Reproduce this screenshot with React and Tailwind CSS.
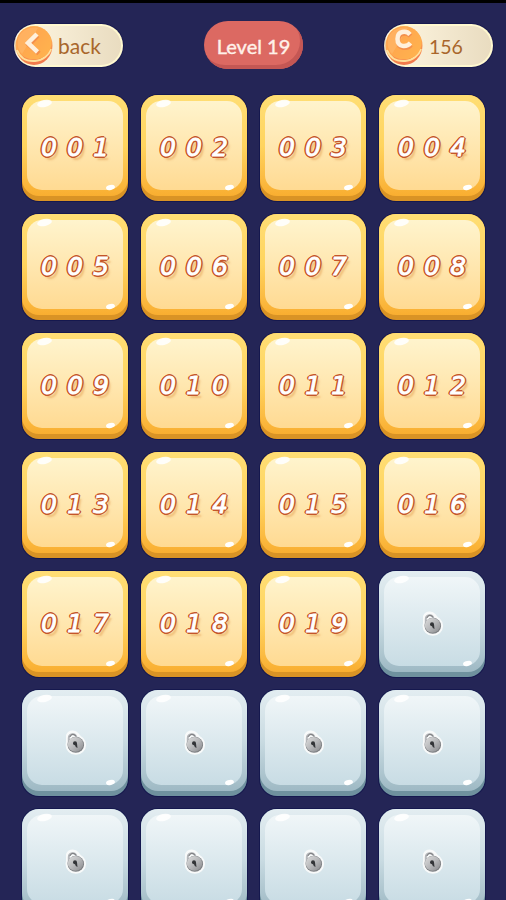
const TOTAL_LEVELS = 28;
const CURRENT_LEVEL = 19;
const COINS = 156;

function Coin({ type }) {
  return (
    <svg className="h-[41px] w-[38px] shrink-0" viewBox="0 0 38 41">
      <defs>
        <linearGradient id={`rim-${type}`} x1="0" y1="0" x2="0.3" y2="1">
          <stop offset="0" stopColor="#ffc05a" />
          <stop offset="0.6" stopColor="#ffa552" />
          <stop offset="1" stopColor="#f27a4c" />
        </linearGradient>
        <linearGradient id={`face-${type}`} x1="0" y1="0" x2="1" y2="0.7">
          <stop offset="0" stopColor="#ffa04e" />
          <stop offset="1" stopColor="#ffb24e" />
        </linearGradient>
      </defs>
      <ellipse cx="19" cy="20.5" rx="18.5" ry="19.5" fill={`url(#rim-${type})`} />
      <path d="M2 25C5 33 12 36.5 20 36C28 35.5 34 30 36 24" fill="none" stroke="#ffe09a" strokeWidth="2" />
      <ellipse cx="19" cy="18" rx="17.5" ry="16.5" fill={`url(#face-${type})`} />
      <path d="M4 11C8 4 16 1.5 23 3L7 29C2 24 1.5 17 4 11Z" fill="#ffbd72" opacity="0.5" />
      {type === "back" ? (
        <g fill="none" strokeLinejoin="miter">
          <path d="M22.5 10.5L14 19.5L24 28.5" stroke="#f5904a" strokeWidth="5" />
          <path d="M22 9L13 18L22.5 27" stroke="#fff0db" strokeWidth="4.5" />
        </g>
      ) : (
        <g fill="none">
          <path d="M25.5 11C22.5 7.5 13 7 13 15.8C13 24.5 22.5 24 26 20" stroke="#f48f4b" strokeWidth="4.5" />
          <path d="M25 9.5C21.500 5.500 12.500 5.500 12.500 14C12.500 22.500 21.500 22.500 25.500 18" stroke="#fff0db" strokeWidth="4.5" />
        </g>
      )}
    </svg>
  );
}

function Pill({ type, children }) {
  return (
    <div className="flex h-[43px] w-[109px] items-center rounded-full border-[2px] border-[#fff8cf] border-l-transparent bg-linear-to-r from-[#fff7e2] to-[#e9dcc0] font-['Lato',sans-serif] text-[#a9662b] shadow-[0_0_0_1px_#181a50]">
      <div className="-ml-[1px] flex">
        <Coin type={type} />
      </div>
      <span className={type === "back" ? "mt-[1px] ml-[5px] text-[21px]" : "mt-[2px] ml-[6px] text-[19.5px]"}>
        {children}
      </span>
    </div>
  );
}

function Lock() {
  return (
    <svg className="h-[28px] w-[24px]" viewBox="0 0 24 28">
      <defs>
        <linearGradient id="lock-body" x1="0" y1="0" x2="1" y2="1">
          <stop offset="0" stopColor="#dedede" />
          <stop offset="0.5" stopColor="#b8b9bb" />
          <stop offset="1" stopColor="#88898c" />
        </linearGradient>
      </defs>
      <g fill="#f8fafa" stroke="#f8fafa" strokeWidth="4" strokeLinejoin="round">
        <ellipse cx="12.8" cy="16.8" rx="8.3" ry="8" />
        <path d="M5 17V7.5C7 3.5 12 4 14 6.5L18 12Z" />
      </g>
      <path d="M5.8 16V10C6 5.5 12 5 13.5 9" fill="none" stroke="#b4b6b9" strokeWidth="2" />
      <path d="M7 9C8 5.8 11 5.6 12.8 8" fill="none" stroke="#66686b" strokeWidth="0.9" />
      <ellipse cx="12.8" cy="16.8" rx="8.3" ry="8" fill="#7b7d80" />
      <ellipse cx="12.5" cy="16.3" rx="7.8" ry="7.4" fill="url(#lock-body)" />
      <circle cx="12" cy="15.3" r="2" fill="#333538" />
      <path d="M11.5 16L14 15.5L14.5 20L12.8 19Z" fill="#333538" />
    </svg>
  );
}

function LevelTile({ level }) {
  const locked = level > CURRENT_LEVEL;
  const digits = String(level).padStart(3, "0").split("");

  return (
    <button
      className={`relative flex h-[106px] w-[106px] flex-col rounded-[17px] pb-[5px] shadow-[0_0_0_1px_#15184e] ${
        locked ? "bg-[#6f919e]" : "bg-[#d99325]"
      }`}
    >
      <span
        className={`block h-[101px] w-full rounded-[17px] px-[5px] pt-[6px] ${
          locked
            ? "bg-linear-to-b from-[#e3edf1] via-[#c9dbe2] to-[#9eb9c4]"
            : "bg-linear-to-b from-[#ffde75] via-[#ffd45e] to-[#f9ae30]"
        }`}
      >
        <span
          className={`flex h-[89px] items-center justify-center rounded-[15px] ${
            locked
              ? "bg-linear-to-b from-[#f0f6f8] to-[#c8dce4]"
              : "bg-linear-to-b from-[#fff4cd] to-[#ffda92]"
          }`}
        >
          {locked ? (
            <span className="mt-[3px]">
              <Lock />
            </span>
          ) : (
            <span className="mt-[5px] flex font-['DejaVu_Sans',sans-serif] text-[24.5px] leading-none text-white italic [-webkit-text-stroke:1px_#ffffff] [text-shadow:2px_0_#c4562a,-2px_0_#c4562a,0_2px_#c4562a,0_-2px_#c4562a,1.4px_1.4px_#c4562a,-1.4px_1.4px_#c4562a,1.4px_-1.4px_#c4562a,-1.4px_-1.4px_#c4562a,3px_4px_2px_rgba(224,150,70,0.5)]">
              {digits.map((digit, i) => (
                <span key={i} className="w-[26px] text-center">
                  {digit}
                </span>
              ))}
            </span>
          )}
        </span>
      </span>

      {/* highlights */}
      <span className="absolute top-[5px] left-[15px] h-[7px] w-[15px] -rotate-12 rounded-[50%] bg-white/90" />
      <span className="absolute right-[13px] bottom-[11px] h-[5px] w-[9px] -rotate-12 rounded-[50%] bg-white" />
    </button>
  );
}

export default function App() {
  const levels = Array.from({ length: TOTAL_LEVELS }, (_, i) => i + 1);

  return (
    <div className="h-[900px] w-[506px] overflow-hidden border-t-[3px] border-black bg-[#242556]">
      <header className="flex h-[92px] items-start justify-between pt-[18px] pr-[13px] pl-[14px]">
        <div className="pt-[3px]">
          <Pill type="back">back</Pill>
        </div>
        <div className="flex h-[48px] w-[99px] items-center justify-center rounded-full bg-[#dc6962] pt-[2px] font-['Lato',sans-serif] text-[20px] text-[#fff1e9] shadow-[inset_-3px_-4px_0_#c45754] [-webkit-text-stroke:0.4px_#fff1e9]">
          Level {CURRENT_LEVEL}
        </div>
        <div className="pt-[3px]">
          <Pill type="coin">{COINS}</Pill>
        </div>
      </header>

      <main className="grid grid-cols-[repeat(4,106px)] gap-[13px] pl-[22px]">
        {levels.map((level) => (
          <LevelTile key={level} level={level} />
        ))}
      </main>
    </div>
  );
}
